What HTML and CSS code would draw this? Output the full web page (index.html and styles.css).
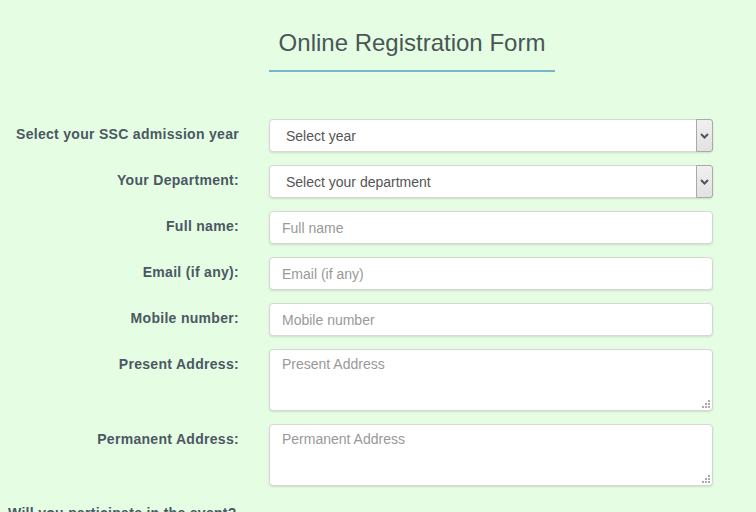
FILE: index.html
```html
<!DOCTYPE html>
<html>
<head>
<meta charset="utf-8">
<title>Online Registration Form</title>
<link rel="stylesheet" href="styles.css">
</head>
<body>
<div class="page">
  <div class="head-row">
    <div class="spacer"></div>
    <h1 class="title">Online Registration Form</h1>
  </div>
  <form class="form">
    <div class="row">
      <label class="lbl">Select your SSC admission year</label>
      <div class="field">
        <select class="ctl sel"><option>Select year</option></select>
        <span class="sel-btn"><svg width="9" height="6" viewBox="0 0 9 6"><path d="M1 1 L4.5 4.5 L8 1" fill="none" stroke="#555" stroke-width="2"/></svg></span>
      </div>
    </div>
    <div class="row">
      <label class="lbl">Your Department:</label>
      <div class="field">
        <select class="ctl sel"><option>Select your department</option></select>
        <span class="sel-btn"><svg width="9" height="6" viewBox="0 0 9 6"><path d="M1 1 L4.5 4.5 L8 1" fill="none" stroke="#555" stroke-width="2"/></svg></span>
      </div>
    </div>
    <div class="row">
      <label class="lbl">Full name:</label>
      <div class="field"><input class="ctl" type="text" placeholder="Full name"></div>
    </div>
    <div class="row">
      <label class="lbl">Email (if any):</label>
      <div class="field"><input class="ctl" type="text" placeholder="Email (if any)"></div>
    </div>
    <div class="row">
      <label class="lbl">Mobile number:</label>
      <div class="field"><input class="ctl" type="text" placeholder="Mobile number"></div>
    </div>
    <div class="row">
      <label class="lbl">Present Address:</label>
      <div class="field">
        <textarea class="ctl area" placeholder="Present Address"></textarea>
        <span class="grip"><svg width="8" height="8" viewBox="0 0 8 8"><g fill="#aaa"><rect x="6" y="0" width="2" height="2"/><rect x="3" y="3" width="2" height="2"/><rect x="6" y="3" width="2" height="2"/><rect x="0" y="6" width="2" height="2"/><rect x="3" y="6" width="2" height="2"/><rect x="6" y="6" width="2" height="2"/></g></svg></span>
      </div>
    </div>
    <div class="row">
      <label class="lbl">Permanent Address:</label>
      <div class="field">
        <textarea class="ctl area" placeholder="Permanent Address"></textarea>
        <span class="grip"><svg width="8" height="8" viewBox="0 0 8 8"><g fill="#aaa"><rect x="6" y="0" width="2" height="2"/><rect x="3" y="3" width="2" height="2"/><rect x="6" y="3" width="2" height="2"/><rect x="0" y="6" width="2" height="2"/><rect x="3" y="6" width="2" height="2"/><rect x="6" y="6" width="2" height="2"/></g></svg></span>
      </div>
    </div>
    <div class="question">Will you participate in the event?</div>
  </form>
</div>
</body>
</html>
```
FILE: styles.css
```css
html, body {
  margin: 0;
  padding: 0;
  background: #e5fde3;
  font-family: "Liberation Sans", Arial, sans-serif;
  overflow: hidden;
}
.page {
  width: 756px;
  height: 512px;
}
.head-row {
  display: flex;
  padding-top: 28px;
}
.spacer {
  width: 269px;
  flex: none;
}
.title {
  margin: 0;
  width: 286px;
  text-align: center;
  font-size: 24px;
  line-height: 30px;
  font-weight: normal;
  color: #4a5656;
  padding-bottom: 12px;
  border-bottom: 2px solid #7ab4c9;
}
.form {
  margin-top: 47px;
  display: flex;
  flex-direction: column;
  gap: 13px;
}
.row {
  display: grid;
  grid-template-columns: 239px 444px;
  column-gap: 30px;
  align-items: start;
}
.lbl {
  text-align: right;
  font-weight: bold;
  font-size: 14px;
  line-height: 20px;
  padding-top: 5px;
  color: #4b5863;
  letter-spacing: 0.3px;
}
.field {
  position: relative;
}
.ctl {
  display: block;
  box-sizing: border-box;
  width: 444px;
  height: 33px;
  margin: 0;
  padding: 0 12px;
  border: 1px solid #d4d9d4;
  border-radius: 4px;
  background: #fff;
  box-shadow: 0 1px 2px rgba(0,0,0,0.12);
  font-family: "Liberation Sans", Arial, sans-serif;
  font-size: 14px;
  color: #555;
  outline: none;
}
.ctl::placeholder {
  color: #999;
}
.sel {
  -webkit-appearance: none;
  appearance: none;
  padding-left: 16px;
  color: #555;
}
.sel-btn {
  position: absolute;
  top: 0;
  right: 0;
  width: 17px;
  height: 33px;
  box-sizing: border-box;
  border: 1px solid #a9a9a9;
  border-radius: 0 3px 3px 0;
  background: linear-gradient(#f0f0f0, #e2e2e2);
  display: flex;
  align-items: center;
  justify-content: center;
  pointer-events: none;
}
.area {
  height: 62px;
  padding: 6px 12px;
  resize: none;
  line-height: 16px;
}
.grip {
  position: absolute;
  right: 3px;
  bottom: 3px;
  width: 8px;
  height: 8px;
  display: block;
  line-height: 0;
  pointer-events: none;
}
.question {
  margin-top: 4px;
  padding-left: 8px;
  font-weight: bold;
  font-size: 14px;
  line-height: 20px;
  color: #4b5863;
  letter-spacing: 0.3px;
}
```
